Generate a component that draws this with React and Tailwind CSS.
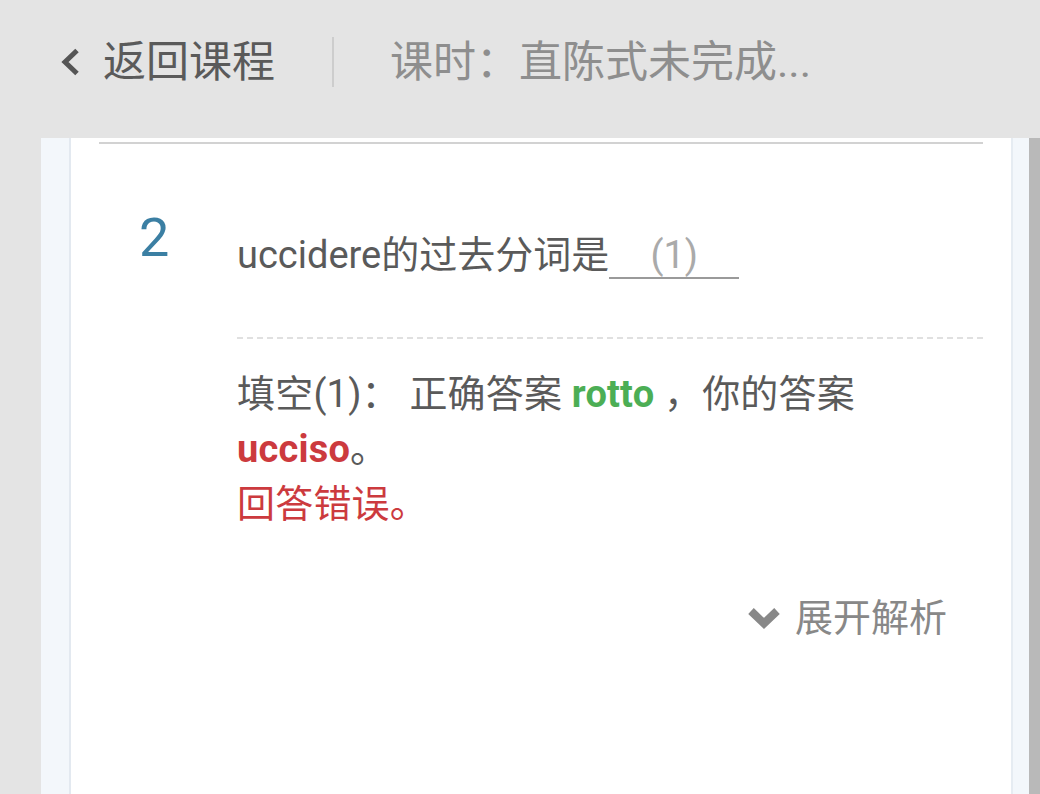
import React from "react";

const font = { fontFamily: "Roboto, 'Noto Sans CJK SC', 'Noto Sans', sans-serif" };

export default function App() {
  return (
    <div style={font} className="w-[1040px] h-[794px] bg-[#e4e4e4] overflow-hidden flex flex-col">
      <header className="h-[138px] shrink-0 flex items-center pb-[14px]">
        <div className="flex items-center pl-[60px]">
          <svg width="22" height="30" viewBox="0 0 22 30" className="mr-[21px]">
            <polyline points="17,3.5 5,15 17,26.5" fill="none" stroke="#555" strokeWidth="5" strokeLinecap="butt" strokeLinejoin="miter" />
          </svg>
          <span className="text-[43px] leading-none text-[#5a5a5a]">返回课程</span>
        </div>
        <div className="w-[2px] h-[50px] bg-[#cdcdcd] ml-[57px] mr-[56px]" />
        <span className="text-[43px] leading-none text-[#8e8e8e]">课时：直陈式未完成...</span>
      </header>
      <div className="flex-1 flex">
        <div className="w-[41px] shrink-0" />
        <div className="w-[30px] shrink-0 bg-[#f3f7fb] border-r-[2px] border-[#e3e9f0]" />
        <div className="flex-1 bg-white px-[28px]">
          <div className="h-[2px] bg-[#d2d2d2] mt-[4px]" />
          <div className="flex pt-[67px]">
            <div className="w-[138px] shrink-0 pl-[40px] text-[54px] leading-none text-[#3b7fa3]">2</div>
            <div className="flex-1">
              <div className="text-[38px] leading-[50px] text-[#5a5a5a] pt-[19px]">
                uccidere的过去分词是
                <span className="inline-block w-[130px] border-b-[2px] border-[#9a9a9a] text-center text-[#aaaaaa] leading-[44px] align-baseline">(1)</span>
              </div>
              <div className="mt-[57px] border-t-[2px] border-dashed border-[#e0e0e0]" />
              <div className="pt-[28px] text-[38px] leading-[55px] text-[#5a5a5a] tracking-[0.2px]">
                填空(1)：&nbsp;正确答案 <span className="font-bold text-[#4cae55]">rotto</span> ，你的答案<br />
                <span className="font-bold text-[#cc3a3e]">ucciso</span>。<br />
                <span className="text-[#cc3a3e]">回答错误。</span>
              </div>
              <div className="flex justify-end items-center mt-[67px] pr-[36px] text-[#888888]">
                <svg width="34" height="26" viewBox="0 0 34 26" className="mr-[14px]">
                  <polyline points="4,6 17,18.5 30,6" fill="none" stroke="#888" strokeWidth="8" strokeLinecap="butt" strokeLinejoin="miter" />
                </svg>
                <span className="text-[38px] leading-none">展开解析</span>
              </div>
            </div>
          </div>
        </div>
        <div className="w-[18px] shrink-0 bg-[#f3f7fb] border-l-[2px] border-[#e6ecf2]" />
        <div className="w-[11px] shrink-0 bg-[#b9b9b9]" />
      </div>
    </div>
  );
}
